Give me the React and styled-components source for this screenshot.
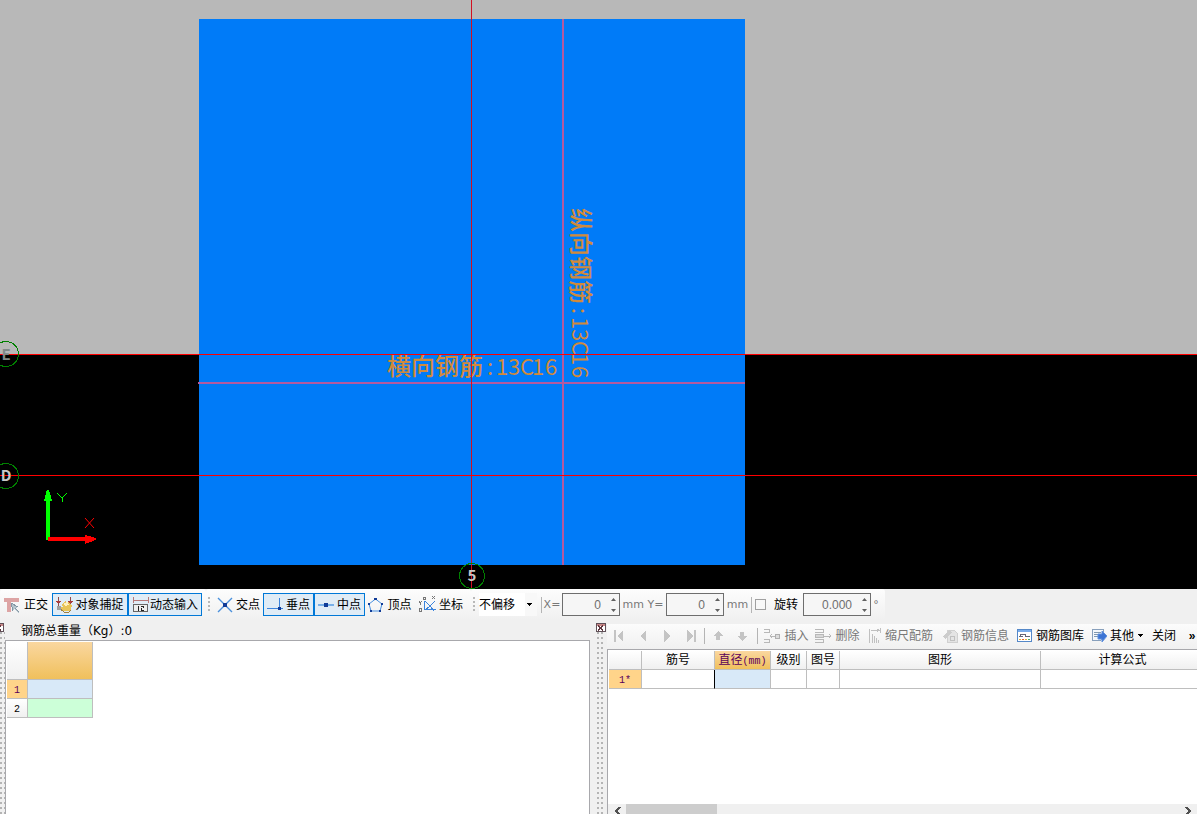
import React from 'react';
import styled, { createGlobalStyle } from 'styled-components';

const Global = createGlobalStyle`
  * { box-sizing: border-box; }
  body { margin: 0; background: #f0f0f0; }
  body, button, input, select {
    font-family: "Liberation Sans", "Noto Sans CJK SC", sans-serif;
    font-size: 12px;
    line-height: 16px;
    color: #000;
  }
`;

const Window = styled.div`
  display: flex;
  flex-direction: column;
  height: 100vh;
  min-height: 600px;
  overflow: hidden;
`;

const Canvas = styled.main`
  flex: 1 1 0;
  min-height: 0;
  background: #000;
  overflow: hidden;
`;

const Drawing = styled.svg`
  display: block;
  width: 100%;
  height: 100%;
`;

const Label = styled.text`
  font-family: "Noto Sans CJK SC", sans-serif;
  font-size: 24px;
  font-weight: 500;
  fill: #d08a3c;
`;

const Digits = styled.tspan`
  font-size: 22px;
  font-weight: 400;
`;

const AxisName = styled.text`
  font-family: "Noto Sans CJK SC", sans-serif;
  font-size: 15px;
  font-weight: 700;
  fill: ${(p) => p.$fill || '#c8c8c8'};
  text-anchor: middle;
`;

const SnapBar = styled.div`
  display: flex;
  align-items: center;
  height: 31px;
  flex: none;
`;

const Group = styled.div`
  display: flex;
  align-items: center;
  height: 31px;
  padding-right: 4px;
  border-radius: 3px;
  background: linear-gradient(#fdfdfd, #f0f0f0);
`;

const ToolButton = styled.button`
  display: flex;
  align-items: center;
  justify-content: center;
  flex: none;
  gap: ${(p) => p.$gap ?? 3}px;
  width: ${(p) => p.$w}px;
  height: 23px;
  padding: 0;
  white-space: nowrap;
  border: 1px solid ${(p) => (p.$on ? '#0078d7' : 'transparent')};
  background: ${(p) => (p.$on ? '#e0ecf6' : 'transparent')};
  color: ${(p) => (p.disabled ? '#787878' : '#000')};
  font-weight: ${(p) => (p.$bold ? 700 : 400)};
`;

const Grip = styled.span`
  flex: none;
  width: 2px;
  height: 15px;
  margin: 0 4px 0 2px;
  background: repeating-linear-gradient(#b8b8b8 0 2px, transparent 2px 4px);
`;

const Divider = styled.span`
  flex: none;
  width: 1px;
  height: 16px;
  margin: 0 ${(p) => p.$space || 0}px;
  background: #b4b4b4;
`;

const Offset = styled.select`
  flex: none;
  width: 58px;
  height: 23px;
  border: 0;
  padding: 0;
  appearance: none;
  background: linear-gradient(90deg, #fff 46px, #f8f8f8 46px);
`;

const SelectBox = styled.label`
  position: relative;
  display: flex;
  margin-right: 4px;
  svg { position: absolute; right: 5px; top: 10px; pointer-events: none; }
`;

const Spin = styled.span`
  display: flex;
  align-items: center;
  flex: none;
  width: ${(p) => p.$w}px;
  height: 23px;
  border: 1px solid #6e6e6e;
  background: #f6f6f6;
`;

const SpinInput = styled.input`
  flex: 1;
  min-width: 0;
  border: 0;
  padding: 0 9px 0 0;
  background: transparent;
  text-align: right;
  color: #6e6e6e;
`;

const Unit = styled.label`
  flex: none;
  width: ${(p) => p.$w}px;
  color: #787878;
  font-family: "DejaVu Sans", sans-serif;
  font-size: 11px;
  white-space: pre;
  text-align: center;
`;

const Check = styled.input`
  appearance: none;
  width: 11px;
  height: 11px;
  margin: 0 8px 0 3px;
  border: 1px solid #a0a0a0;
  background: #f8f8f8;
`;

const CheckLabel = styled.label`
  padding-right: 5px;
`;

const Dock = styled.section`
  display: grid;
  grid-template-columns: minmax(0, 1fr) 17px minmax(0, 1fr);
  flex: none;
  height: 194px;
`;

const LeftPane = styled.div`
  display: grid;
  grid-template-columns: 5px minmax(0, 1fr);
  grid-template-rows: 20px minmax(0, 1fr);
`;

const Edge = styled.div`
  grid-row: 1 / 3;
  display: flex;
  flex-direction: column;
  padding-top: 3px;
  overflow: hidden;
  svg { flex: none; margin-left: -6px; }
`;

const Title = styled.h2`
  margin: 0;
  padding: 3px 0 0 16px;
  font-family: "DejaVu Sans", "Noto Sans CJK SC", sans-serif;
  font-size: 12px;
  line-height: 16px;
  font-weight: 400;
`;

const Sheet = styled.div`
  min-width: 0;
  min-height: 0;
  overflow: hidden;
  border: solid #a8a8ac;
  border-width: 1px 1px 0 1px;
  background: #fff;
  padding: 1px 0 0 1px;
`;

const BarSheet = styled(Sheet)`
  flex: 1;
  border-right: 0;
`;

const Splitter = styled.div`
  display: flex;
  flex-direction: column;
  padding: 3px 0 0 6px;
  overflow: hidden;
  svg { flex: none; }
`;

const Dots = styled.div`
  flex: 1;
  width: 8px;
  margin-left: ${(p) => p.$inset || 0}px;
  background-image: linear-gradient(90deg, #b4b4b4 2px, transparent 2px);
  background-size: 4px 5px;
  mask: repeating-linear-gradient(#000 0 2px, transparent 2px 5px);
`;

const RightPane = styled.div`
  display: flex;
  flex-direction: column;
  min-width: 0;
  min-height: 0;
`;

const EditBar = styled.div`
  display: flex;
  align-items: center;
  flex: none;
  height: 25px;
  margin-top: 4px;
  padding-bottom: 2px;
  background: linear-gradient(#fcfcfc, #f0f0f0);
  overflow: hidden;
`;

const Grid = styled.table`
  border-collapse: separate;
  border-spacing: 0;
  table-layout: fixed;
  width: ${(p) => p.$w};
`;

const fills = {
  head: 'linear-gradient(#ffffff, #f0f0f0)',
  gold: 'linear-gradient(#fad7a0, #f0c05c)',
  mark: '#ffd48a',
  blue: '#d8e9f8',
  green: '#ccffd8',
  none: '#ffffff',
};

const cell = (p) => `
  height: ${p.$h || 19}px;
  padding: 0;
  border: solid #bebebe;
  border-width: 0 1px 1px 0;
  background: ${fills[p.$fill || 'none']};
  color: ${p.$fill === 'mark' || p.$fill === 'gold' ? '#5a005a' : '#000'};
  font-weight: 400;
  line-height: 16px;
  text-align: center;
  white-space: nowrap;
`;
const Th = styled.th`${cell}`;
const Td = styled.td`
  ${cell}
  ${(p) => p.$before && 'border-right-color: #000;'}
`;

const Mono = styled.span`
  font-family: "Liberation Mono", monospace;
  font-size: 10px;
  line-height: 12px;
`;

const Scroll = styled.div`
  display: flex;
  align-items: center;
  flex: none;
  height: 10px;
  border-left: 1px solid #a8a8ac;
  padding-left: 1px;
  background: #f0f0f0;
  overflow: hidden;
`;

const Arrow = styled.button`
  display: flex;
  justify-content: center;
  align-items: center;
  width: 17px;
  height: 10px;
  padding: 3px 0 0;
  border: 0;
  background: transparent;
`;

const Track = styled.div`
  flex: 1;
  height: 10px;
`;

const Thumb = styled.div`
  width: 91px;
  height: 10px;
  background: #cdcdcd;
`;

const Svg = ({ w = 16, h = 16, children }) => (
  <svg width={w} height={h} viewBox={`0 0 ${w} ${h}`} fill="none" shapeRendering="crispEdges" aria-hidden="true">{children}</svg>
);

const OrthoIcon = () => (
  <Svg w={16}>
    <path d="M0 1h15v4H0zM3 5h4v10H3z" fill="#dda4a4" />
    <path d="M7 6l7 4-3 1 4 4-1 1-4-4-2 2z" fill="#b4c4cc" />
    <path d="M7 6l2 8M7 6l7 4M11 11l4 4" stroke="#8496a4" />
  </Svg>
);
const SnapIcon = () => (
  <Svg w={17} h={17}>
    <path d="M2 1v9M14 1v9" stroke="#904848" />
    <path d="M0 5h5v1H0zM1 6h3v1H1zM12 5h5v1h-5zM13 6h3v1h-3z" fill="#a83c3c" />
    <path d="M6 8l3-3 5 2 2 3-2 5H8l-5-3 4-1z" fill="#e8c458" />
    <path d="M8 7l4-1 1 3-4 1z" fill="#fff0c0" />
    <path d="M3 12l5 4h5l2-2" stroke="#a08040" />
    <path d="M1 10h4v4H1z" fill="#a0a0a0" />
  </Svg>
);
const DynIcon = () => (
  <Svg w={17}>
    <path d="M1 0v6M16 0v6M1 3h15" stroke="#b87878" />
    <path d="M1.500 7.500h14v7h-14z" fill="#eee" stroke="#666" />
    <path d="M6.500 9v5M9 9.500h3M11.500 9v2M9.500 11v3M9 13.500h3" stroke="#222" />
  </Svg>
);
const CrossIcon = () => (
  <Svg w={16}>
    <path d="M1 1l14 14M15 1L1 15" stroke="#4a90dc" strokeWidth="1.400" shapeRendering="auto" />
    <path d="M6 6h4v4H6z" fill="#103c98" />
  </Svg>
);
const PerpIcon = () => (
  <Svg w={16}>
    <path d="M12.500 1v11M0 11.500h16" stroke="#3c84dc" />
    <path d="M11 10h3v3h-3z" fill="#103c98" />
  </Svg>
);
const MidIcon = () => (
  <Svg w={16}>
    <path d="M0 8h16" stroke="#78b0e8" strokeWidth="2" />
    <path d="M6 6h4v4H6z" fill="#103c98" />
  </Svg>
);
const VertexIcon = () => (
  <Svg w={16}>
    <path d="M7.500 2L14 7l-2 7H3L1 7z" stroke="#4890e0" shapeRendering="auto" />
    <path d="M6 1h3v2H6zM0 6h2v2H0zM13 6h2v2h-2zM2 13h2v2H2zM11 13h2v2h-2z" fill="#103c98" />
  </Svg>
);
const CoordIcon = () => (
  <Svg w={17} h={17}>
    <path d="M5.500 5v9M5 13.500h12M6 5l5 5 5-5M6 14l5-4 4 5" stroke="#3c84dc" />
    <path d="M4 1h2v2H4zM13 0l3 3M16 0l-3 3M0 5l1 2 2-2M1.500 7v2M.5 12.500h2v3h-2z" stroke="#777" />
  </Svg>
);
const Tri = ({ c = '#000' }) => <Svg w={6} h={3}><path d="M0 0h6L3 3z" fill={c} /></Svg>;
const Spinners = () => (
  <Svg w={9} h={19}>
    <path d="M1 6h5L3.500 3zM1 14h5L3.500 17z" fill="#606060" shapeRendering="auto" />
  </Svg>
);
const NavIcon = ({ kind }) => (
  <Svg w={12} h={12}>
    {kind === 'first' && <path d="M1 0h2v12H1zM10 0v12L4 6z" fill="#c4c4c4" />}
    {kind === 'prev' && <path d="M9 0v12L3 6z" fill="#c4c4c4" />}
    {kind === 'next' && <path d="M3 0v12l6-6z" fill="#c4c4c4" />}
    {kind === 'last' && <path d="M9 0h2v12H9zM2 0v12l6-6z" fill="#c4c4c4" />}
    {kind === 'up' && <path d="M6 1l5 5H8v4H4V6H1z" fill="#c4c4c4" />}
    {kind === 'down' && <path d="M6 11l5-5H8V2H4v4H1z" fill="#c4c4c4" />}
  </Svg>
);
const InsertIcon = () => (
  <Svg w={17}>
    <path d="M0 1.500h5.500v3H0M0 11.500h5.500v3H0M6 8.500h5M8 6L6 8l2 2" stroke="#b8b8b8" />
    <path d="M11.500 6.500h4v4h-4z" fill="#ddd" stroke="#b0b0b0" />
  </Svg>
);
const DeleteIcon = () => (
  <Svg w={17}>
    <path d="M0 1.500h8.500v3H0M0 11.500h8.500v3H0M9 8.500h7M14 6l2 2-2 2" stroke="#b8b8b8" />
    <path d="M.5 6.500h8v3h-8z" fill="#d8d8d8" stroke="#b8b8b8" />
  </Svg>
);
const ScaleIcon = () => (
  <Svg w={14}>
    <path d="M1.500 1v14M3 2.500h9M9 1l2 1-2 2M4.500 6v9M6.500 8v7M8.500 10v5M10.500 12v3M12.500 0v5" stroke="#c0c0c0" />
  </Svg>
);
const InfoIcon = () => (
  <Svg w={16}>
    <path d="M5 2h7l3 3v9H5z" fill="#e4e4e4" stroke="#d0d0d0" />
    <path d="M1 8l6-6 3 2-7 7z" fill="#cccccc" />
    <path d="M8.500 8.500h4v4h-4z" stroke="#c0c0c0" />
  </Svg>
);
const LibIcon = () => (
  <Svg w={16}>
    <path d="M.5 1.500h14v12H.5z" fill="#fff" stroke="#5588c8" />
    <path d="M1 2h13v2H1z" fill="#78acec" />
    <path d="M2 8.500h4M3.500 8V6.500h5V9M8 8.500h5" stroke="#667" />
    <path d="M2 11h2v1H2z" fill="#e8b030" /><path d="M5 11h2v1H5z" fill="#e86030" /><path d="M8 11h2v1H8z" fill="#e8b030" /><path d="M11 11h2v1h-2z" fill="#50b060" />
  </Svg>
);
const OtherIcon = () => (
  <Svg w={16}>
    <path d="M1.500 1.500h11v9l-3 2h-8z" fill="#f4f8fc" stroke="#88a0bc" />
    <path d="M3 4.500h7M3 6.500h5M3 8.500h4" stroke="#8098b0" />
    <path d="M7 6h4V3l5 5-5 6v-3H7z" fill="#3c74d4" stroke="#6090dc" shapeRendering="auto" />
  </Svg>
);
const CloseIcon = () => (
  <Svg w={10} h={9}>
    <path d="M.5 .5h9v8h-9z" fill="#fff" stroke="#605058" />
    <path d="M1 1h8v2H1z" fill="#c88888" />
    <path d="M2 3l5 4M7 3L2 7" stroke="#603840" strokeWidth="1.500" />
  </Svg>
);

const navNames = { first: '首条', prev: '上一条', next: '下一条', last: '末条', up: '上移', down: '下移' };
const NavButton = ({ kind }) => (
  <ToolButton $w={24} disabled aria-label={navNames[kind]}><NavIcon kind={kind} /></ToolButton>
);

export default function App() {
  return (
    <Window>
      <Global />
      <Canvas>
        <Drawing role="img" aria-label="钢筋平面图">
          <rect width="100%" height="354" fill="#b8b8b8" />
          <rect x="199" y="19" width="546" height="546" fill="#007bf8" />
          <Label x="387" y="375">横向钢筋
            <Digits x="487 496 508 520 532 545">:13C16</Digits>
          </Label>
          <Label transform="translate(572 208) rotate(90)" x="0" y="0">纵向钢筋
            <Digits x="100 109 121 133 145 158">:13C16</Digits>
          </Label>
          <g shapeRendering="crispEdges">
            <rect x="562" y="19" width="2" height="546" fill="#b45aa0" />
            <rect x="198" y="382" width="547" height="2" fill="#b45aa0" />
            <rect x="471" y="0" width="1" height="589" fill="#d21020" />
            <rect x="0" y="354" width="100%" height="1" fill="#f00" />
            <rect x="0" y="475" width="100%" height="1" fill="#f00" />
            <g fill="none" stroke="#008000">
              <circle cx="6" cy="354" r="12.500" />
              <circle cx="6" cy="476" r="12.500" />
              <circle cx="472" cy="576" r="12.500" />
            </g>
            <path d="M46 540V501h-2l2-8 1-3h2l1 3 2 8h-2v39z" fill="#0f0" />
            <path d="M48 537h37v-2l8 2 4 2-4 2-8 3v-3H48z" fill="#f00" />
            <path d="M57 493l5 5 5-5M62 498v4" fill="none" stroke="#0f0" />
          </g>
          <path d="M85 518l9 10M94 518l-9 10" fill="none" stroke="#f00" />
          <AxisName x="6" y="360" $fill="#808888">E</AxisName>
          <AxisName x="6" y="481">D</AxisName>
          <AxisName x="472" y="581">5</AxisName>
        </Drawing>
      </Canvas>

      <SnapBar role="toolbar">
        <Group>
          <ToolButton $w={52} $gap={4}><OrthoIcon />正交</ToolButton>
          <ToolButton $w={76} $gap={2} $on><SnapIcon />对象捕捉</ToolButton>
          <ToolButton $w={74} $gap={1} $on><DynIcon />动态输入</ToolButton>
        </Group>
        <Group>
          <Grip />
          <ToolButton $w={49}><CrossIcon />交点</ToolButton>
          <ToolButton $w={51} $on><PerpIcon />垂点</ToolButton>
          <ToolButton $w={51} $on><MidIcon />中点</ToolButton>
          <ToolButton $w={50}><VertexIcon />顶点</ToolButton>
          <ToolButton $w={52}><CoordIcon />坐标</ToolButton>
        </Group>
        <Group>
          <Grip />
          <SelectBox>
            <Offset aria-label="偏移方式"><option>不偏移</option></Offset>
            <Tri />
          </SelectBox>
          <Divider />
          <Unit $w={20} htmlFor="dx">X=</Unit>
          <Spin $w={58}><SpinInput id="dx" defaultValue="0" /><Spinners /></Spin>
          <Unit $w={46} htmlFor="dy">mm Y=</Unit>
          <Spin $w={58}><SpinInput id="dy" defaultValue="0" /><Spinners /></Spin>
          <Unit $w={27} htmlFor="dy">mm</Unit>
          <Divider />
          <Check type="checkbox" id="rot" />
          <CheckLabel htmlFor="rot">旋转</CheckLabel>
          <Spin $w={68}><SpinInput id="angle" aria-label="旋转角度" defaultValue="0.000" /><Spinners /></Spin>
          <Unit $w={10} htmlFor="angle">°</Unit>
        </Group>
      </SnapBar>

      <Dock>
        <LeftPane>
          <Edge><CloseIcon /><Dots /></Edge>
          <Title>钢筋总重量（Kg）:0</Title>
          <Sheet>
            <Grid $w="86px">
              <colgroup><col width="21" /><col width="65" /></colgroup>
              <thead><tr><Th $h={38} $fill="head" /><Th $h={38} $fill="gold" /></tr></thead>
              <tbody>
                <tr><Th $fill="mark"><Mono>1</Mono></Th><Td $fill="blue" /></tr>
                <tr><Th $fill="head"><Mono>2</Mono></Th><Td $fill="green" /></tr>
              </tbody>
            </Grid>
          </Sheet>
        </LeftPane>
        <Splitter><CloseIcon /><Dots $inset={1} /></Splitter>
        <RightPane>
          <EditBar role="toolbar">
            <NavButton kind="first" />
            <NavButton kind="prev" />
            <NavButton kind="next" />
            <NavButton kind="last" />
            <Divider $space={1} />
            <NavButton kind="up" />
            <NavButton kind="down" />
            <Divider $space={3} />
            <ToolButton $w={51} disabled><InsertIcon />插入</ToolButton>
            <ToolButton $w={51} disabled><DeleteIcon />删除</ToolButton>
            <ToolButton $w={75} disabled><ScaleIcon />缩尺配筋</ToolButton>
            <ToolButton $w={75} disabled><InfoIcon />钢筋信息</ToolButton>
            <ToolButton $w={75}><LibIcon />钢筋图库</ToolButton>
            <ToolButton $w={58}><OtherIcon />其他<Tri /></ToolButton>
            <ToolButton $w={36}>关闭</ToolButton>
            <ToolButton $w={20} $bold aria-label="更多">»</ToolButton>
          </EditBar>
          <BarSheet>
            <Grid $w="calc(100% + 8px)">
              <colgroup>
                <col width="33" /><col width="73" /><col width="56" /><col width="36" /><col width="33" /><col width="201" /><col />
              </colgroup>
              <thead>
                <tr>
                  <Th $fill="head" />
                  <Th $fill="head">筋号</Th>
                  <Th $fill="gold">直径<Mono>(mm)</Mono></Th>
                  <Th $fill="head">级别</Th>
                  <Th $fill="head">图号</Th>
                  <Th $fill="head">图形</Th>
                  <Th $fill="head">计算公式</Th>
                </tr>
              </thead>
              <tbody>
                <tr>
                  <Th $fill="mark"><Mono>1*</Mono></Th>
                  <Td $before /><Td $fill="blue" /><Td /><Td /><Td /><Td />
                </tr>
              </tbody>
            </Grid>
          </BarSheet>
          <Scroll>
            <Arrow aria-label="向左"><Svg w={7} h={8}><path d="M6 0L2 4l4 4" stroke="#505050" strokeWidth="2" /></Svg></Arrow>
            <Track><Thumb /></Track>
            <Arrow aria-label="向右"><Svg w={7} h={8}><path d="M1 0l4 4-4 4" stroke="#505050" strokeWidth="2" /></Svg></Arrow>
          </Scroll>
        </RightPane>
      </Dock>
    </Window>
  );
}
